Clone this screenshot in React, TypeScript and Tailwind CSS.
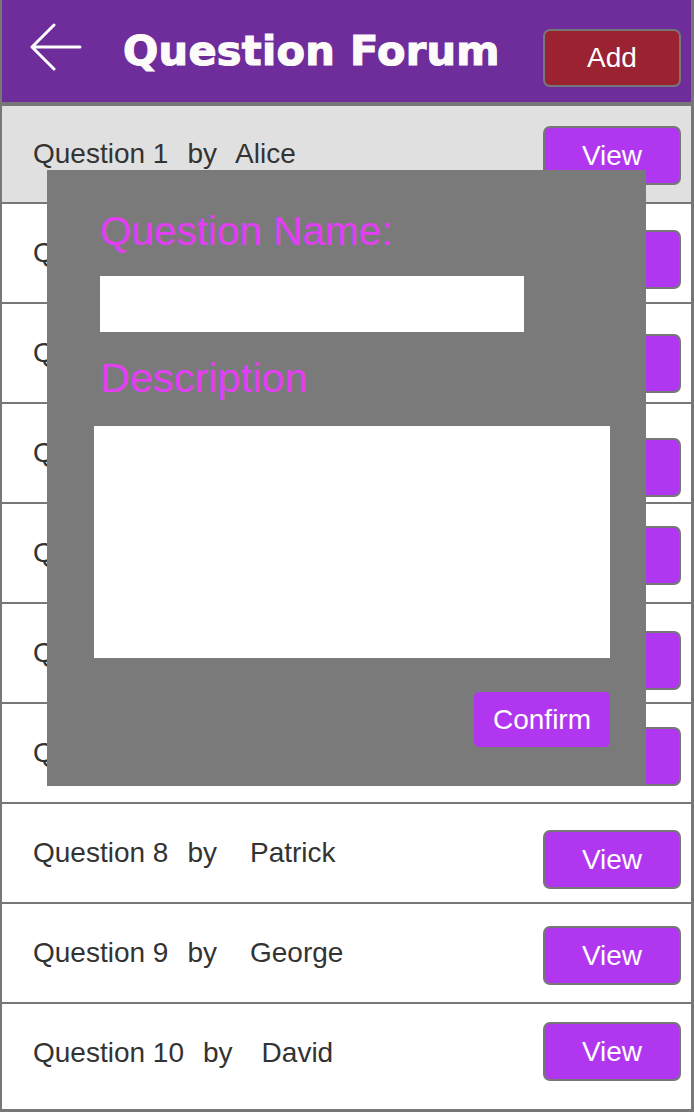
import React from "react";

const questions = [
  { n: 1, name: "Alice", nameGap: "ml-[18px]", btnTop: "mt-[20px]", bg: "bg-[#e0e0e0]", h: "h-[96px]", line: "border-b-2" },
  { n: 2, name: "Bob", nameGap: "ml-[33px]", btnTop: "mt-[26px]", bg: "bg-white", h: "h-[98px]", line: "border-b-2" },
  { n: 3, name: "Carol", nameGap: "ml-[33px]", btnTop: "mt-[30px]", bg: "bg-white", h: "h-[98px]", line: "border-b-2" },
  { n: 4, name: "Emma", nameGap: "ml-[33px]", btnTop: "mt-[34px]", bg: "bg-white", h: "h-[98px]", line: "border-b-2" },
  { n: 5, name: "Frank", nameGap: "ml-[33px]", btnTop: "mt-[22px]", bg: "bg-white", h: "h-[98px]", line: "border-b-2" },
  { n: 6, name: "Helen", nameGap: "ml-[33px]", btnTop: "mt-[27px]", bg: "bg-white", h: "h-[98px]", line: "border-b-2" },
  { n: 7, name: "Ivan", nameGap: "ml-[33px]", btnTop: "mt-[23px]", bg: "bg-white", h: "h-[98px]", line: "border-b-2" },
  { n: 8, name: "Patrick", nameGap: "ml-[33px]", btnTop: "mt-[26px]", bg: "bg-white", h: "h-[98px]", line: "border-b-2" },
  { n: 9, name: "George", nameGap: "ml-[33px]", btnTop: "mt-[22px]", bg: "bg-white", h: "h-[98px]", line: "border-b-2" },
  { n: 10, name: "David", nameGap: "ml-[29px]", btnTop: "mt-[18px]", bg: "bg-white", h: "h-[98px]", line: "border-b-0" },
];

const BackArrow = () => (
  <svg width="52" height="48" viewBox="0 0 52 48" fill="none" className="shrink-0">
    <path
      d="M2 24 H50 M24 2 L2 24 L24 46"
      stroke="white"
      strokeWidth="3"
      strokeLinecap="round"
      strokeLinejoin="round"
    />
  </svg>
);

const App = () => {
  return (
    <div className="relative w-[694px] h-[1112px] overflow-hidden bg-white border-l-2 border-r-[3px] border-b-[3px] border-[#777] font-['Liberation_Sans',Arial,sans-serif]">
      {/* header */}
      <div className="flex items-start h-[106px] bg-[#6f2d9b] border-b-4 border-[#777]">
        <div className="ml-[28px] mt-[23px]">
          <BackArrow />
        </div>
        <h1 className="ml-[41px] mt-[20px] text-[41.5px] font-bold text-[#fdfafa] [-webkit-text-stroke:1.2px_#fdfafa] tracking-[0.3px] font-['DejaVu_Sans',sans-serif] whitespace-nowrap">
          Question Forum
        </h1>
        <button className="ml-auto mr-[10px] mt-[29px] w-[138px] h-[58px] rounded-[7px] border-2 border-[#777] bg-[#9b2231] text-white text-[28px]">
          Add
        </button>
      </div>

      {/* list */}
      <div className="flex flex-col">
        {questions.map((q) => (
          <div
            key={q.n}
            className={`flex items-start ${q.h} ${q.bg} ${q.line} border-[#777] box-content`}
          >
            <div className="self-center pl-[31px] text-[28px] text-[#333] whitespace-nowrap">
              <span>Question {q.n}</span>
              <span className="ml-[19px]">by</span>
              <span className={q.nameGap}>{q.name}</span>
            </div>
            <button
              className={`${q.btnTop} ml-auto mr-[10px] w-[138px] h-[59px] rounded-[7px] border-2 border-[#777] bg-[#b037ef] text-white text-[28px]`}
            >
              View
            </button>
          </div>
        ))}
      </div>

      {/* add question dialog */}
      <div className="absolute left-[45px] top-[170px] w-[599px] h-[616px] bg-[#7a7a7a] flex flex-col pl-[53px] pt-[38px]">
        <div className="text-[40.5px] leading-[46px] text-[#e33ef5]">Question Name:</div>
        <div className="mt-[22px] w-[424px] h-[56px] bg-white" />
        <div className="mt-[23px] text-[41.5px] leading-[46px] text-[#e33ef5]">Description</div>
        <div className="mt-[25px] -ml-[6px] w-[516px] h-[232px] bg-white" />
        <button className="self-end mr-[36px] mt-[34px] w-[136px] h-[55px] rounded-[5px] bg-[#b037ef] text-white text-[28px]">
          Confirm
        </button>
      </div>
    </div>
  );
};

export default App;
